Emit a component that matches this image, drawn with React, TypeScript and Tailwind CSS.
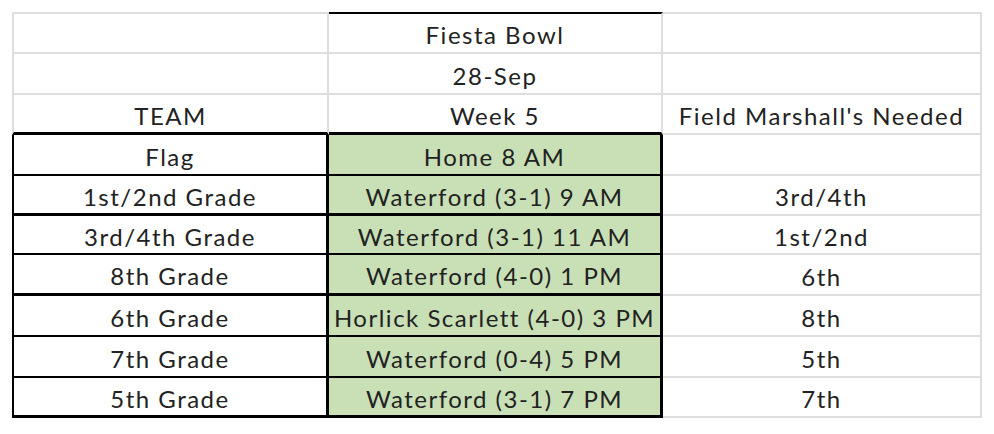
import React from "react";

type Row = { cells: [string, string, string]; h: number };

const rows: Row[] = [
  { cells: ["", "Fiesta Bowl", ""], h: 42 },
  { cells: ["", "28-Sep", ""], h: 41 },
  { cells: ["TEAM", "Week 5", "Field Marshall's Needed"], h: 40 },
  { cells: ["Flag", "Home 8 AM", ""], h: 41 },
  { cells: ["1st/2nd Grade", "Waterford (3-1) 9 AM", "3rd/4th"], h: 40 },
  { cells: ["3rd/4th Grade", "Waterford (3-1) 11 AM", "1st/2nd"], h: 39 },
  { cells: ["8th Grade", "Waterford (4-0) 1 PM", "6th"], h: 41 },
  { cells: ["6th Grade", "Horlick Scarlett (4-0) 3 PM", "8th"], h: 41 },
  { cells: ["7th Grade", "Waterford (0-4) 5 PM", "5th"], h: 41 },
  { cells: ["5th Grade", "Waterford (3-1) 7 PM", "7th"], h: 40 },
];

const thickBottom = new Set([2, 4, 6, 9]);

const textCls =
  "flex items-center justify-center pt-[4px] text-[24px] leading-none tracking-[1.5px] whitespace-nowrap";

export default function App() {
  return (
    <div
      className="w-[994px] h-[434px] bg-white pt-[12px] pl-[12px] text-[#222222]"
      style={{ fontFamily: "Lato, 'Liberation Sans', sans-serif" }}
    >
      <div className="flex flex-col w-[970px]">
        {rows.map((r, i) => {
          const header = i < 3;
          const first = i === 0;
          const bottom =
            i < 2
              ? "border-b-2 border-b-[#dedede]"
              : thickBottom.has(i)
              ? "border-b-[3px] border-b-black"
              : "border-b-2 border-b-black";
          const c1 = [
            "w-[317px]",
            textCls,
            first ? "border-t-2 border-t-[#dedede]" : "",
            header ? "border-l-2 border-l-[#dedede]" : "border-l-2 border-l-black",
            header ? "border-r-2 border-r-[#dedede]" : "border-r-[3px] border-r-black",
            bottom,
          ].join(" ");
          const c2 = [
            "w-[334px]",
            textCls,
            first ? "border-t-2 border-t-black" : "",
            header
              ? "border-r-2 border-r-[#dedede] bg-white"
              : "border-r-[3px] border-r-black bg-[#c9dfb6]",
            bottom,
          ].join(" ");
          const c3 = [
            "w-[319px]",
            textCls,
            "border-r-2 border-r-[#dedede] border-b-2 border-b-[#dedede]",
            first ? "border-t-2 border-t-[#dedede]" : "",
          ].join(" ");
          return (
            <div key={i} className="flex" style={{ height: r.h }}>
              <div className={c1}>{r.cells[0]}</div>
              <div className={c2}>{r.cells[1]}</div>
              <div className={c3}>{r.cells[2]}</div>
            </div>
          );
        })}
      </div>
    </div>
  );
}
